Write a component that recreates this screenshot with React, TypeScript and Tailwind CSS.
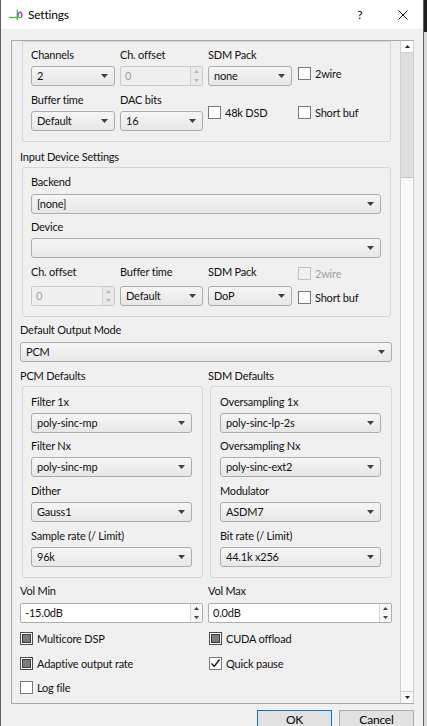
import React from "react";

const TXT = "text-[11px] tracking-[-0.2px]";

function Arrow({ color = "#404040" }: { color?: string }) {
  return (
    <svg width="7" height="4" viewBox="0 0 7 4" className="shrink-0">
      <path d="M0 0H7L3.5 4Z" fill={color} />
    </svg>
  );
}

function Combo({ text, className = "" }: { text: string; className?: string }) {
  return (
    <div
      className={`h-[20px] border border-[#acacac] rounded-[3px] bg-linear-to-b from-[#f6f6f6] to-[#e7e7e7] flex items-center pl-[5px] pr-[6px] ${className}`}
    >
      <span className={`flex-1 truncate leading-[16px] ${TXT} text-[#111]`}>{text}</span>
      <Arrow />
    </div>
  );
}

function Spin({ text, disabled, className = "" }: { text: string; disabled?: boolean; className?: string }) {
  const arrow = disabled ? "#b8b8b8" : "#404040";
  return (
    <div
      className={`h-[20px] flex border rounded-[2px] ${
        disabled ? "border-[#c8c8c8] bg-[#efefef]" : "border-[#adadad] bg-white"
      } ${className}`}
    >
      <span className={`flex-1 pl-[4px] leading-[18px] ${TXT} ${disabled ? "text-[#9d9d9d]" : "text-[#111]"}`}>
        {text}
      </span>
      <div
        className={`w-[12px] flex flex-col border-l ${
          disabled ? "border-[#d2d2d2] bg-[#e9e9e9]" : "border-[#d6d6d6] bg-[#f7f7f7]"
        }`}
      >
        <div className="flex-1 flex items-center justify-center">
          <svg width="5" height="3" viewBox="0 0 5 3">
            <path d="M0 3H5L2.5 0Z" fill={arrow} />
          </svg>
        </div>
        <div className="flex-1 flex items-center justify-center">
          <svg width="5" height="3" viewBox="0 0 5 3">
            <path d="M0 0H5L2.5 3Z" fill={arrow} />
          </svg>
        </div>
      </div>
    </div>
  );
}

function Label({ children, className = "" }: { children: React.ReactNode; className?: string }) {
  return <div className={`h-[16px] leading-[16px] ${TXT} text-[#111] whitespace-nowrap ${className}`}>{children}</div>;
}

type CState = "off" | "on" | "partial" | "disabled";

function Check({ label, state, className = "" }: { label: string; state: CState; className?: string }) {
  return (
    <div className={`flex items-center h-[13px] ${className}`}>
      <div
        className={`w-[13px] h-[13px] border shrink-0 flex items-center justify-center ${
          state === "disabled"
            ? "border-[#c4c4c4] bg-[#f0f0f0]"
            : state === "partial"
            ? "border-[#4a4a4a] bg-white"
            : "border-[#7a7a7a] bg-white"
        }`}
      >
        {state === "partial" && <div className="w-[9px] h-[9px] bg-[#7c7c7c] border border-[#3a3a3a]" />}
        {state === "on" && (
          <svg width="11" height="11" viewBox="0 0 11 11">
            <path d="M1.5 5.5L4.2 8.5L9.5 1.5" stroke="#1a1a1a" strokeWidth="1.4" fill="none" />
          </svg>
        )}
      </div>
      <span
        className={`ml-[4px] ${TXT} leading-[16px] whitespace-nowrap ${
          state === "disabled" ? "text-[#a0a0a0]" : "text-[#111]"
        }`}
      >
        {label}
      </span>
    </div>
  );
}

function Stack({ label, children, className = "" }: { label: string; children: React.ReactNode; className?: string }) {
  return (
    <div className={`flex flex-col ${className}`}>
      <Label>{label}</Label>
      <div className="mt-[3px]">{children}</div>
    </div>
  );
}

function AppIcon() {
  return (
    <svg width="16" height="16" viewBox="0 0 16 16" className="shrink-0">
      <path d="M1 10.5H14" stroke="#3cc23c" strokeWidth="1.3" />
      <path d="M9.3 2.5V13" stroke="#3cc23c" strokeWidth="1.3" />
      <path d="M9.8 10C10.2 4.5 13 3.5 13.8 7.5L13.8 10" stroke="#c040c8" strokeWidth="1.5" fill="none" />
    </svg>
  );
}

export default function App() {
  return (
    <div className="w-[427px] h-[726px] flex bg-[#dadada] font-['Lato',sans-serif] text-black overflow-hidden">
      <div className="w-[424px] h-full flex flex-col border-l border-r border-[#5f5f5f] bg-[#f0f0f0] shrink-0">
        {/* title bar */}
        <div className="h-[29px] bg-white flex items-center shrink-0">
          <div className="ml-[7px]">
            <AppIcon />
          </div>
          <span className="ml-[4px] text-[12px] tracking-[-0.2px] leading-[16px]">Settings</span>
          <div className="flex-1" />
          <span className="w-[12px] text-center text-[12px] leading-[16px]">?</span>
          <svg width="10" height="10" viewBox="0 0 10 10" className="ml-[32px] mr-[15px]">
            <path d="M0.5 0.5L9.5 9.5M9.5 0.5L0.5 9.5" stroke="#111" strokeWidth="1" />
          </svg>
        </div>

        {/* body */}
        <div className="flex-1 pl-[10px] pr-[9px] pt-[11px] flex flex-col">
          <div className="h-[664px] flex border-l border-t border-b border-[#a9a9a9]">
            {/* viewport */}
            <div className="w-[387px] h-full overflow-hidden pl-[8px] pr-[7px]">
              {/* Output group (scrolled) */}
              <div className="ml-[2px] mr-[1px] border border-[#d5d5d5] rounded-b-[3px] pl-[8px] pr-[9px] pt-[5px] pb-[10px]">
                <div className="flex items-start">
                  <Stack label="Channels" className="w-[84px]">
                    <Combo text="2" />
                  </Stack>
                  <Stack label="Ch. offset" className="w-[83px] ml-[5px]">
                    <Spin text="0" disabled />
                  </Stack>
                  <Stack label="SDM Pack" className="w-[84px] ml-[5px]">
                    <Combo text="none" />
                  </Stack>
                  <Check label="2wire" state="off" className="ml-[6px] mt-[20px]" />
                </div>
                <div className="flex items-start mt-[6px]">
                  <Stack label="Buffer time" className="w-[84px]">
                    <Combo text="Default" />
                  </Stack>
                  <Stack label="DAC bits" className="w-[83px] ml-[5px]">
                    <Combo text="16" />
                  </Stack>
                  <Check label="48k DSD" state="off" className="w-[84px] ml-[5px] mt-[14px]" />
                  <Check label="Short buf" state="off" className="ml-[6px] mt-[14px]" />
                </div>
              </div>

              <Label className="mt-[7px]">Input Device Settings</Label>
              <div className="mt-[2px] ml-[2px] mr-[1px] border border-[#d5d5d5] rounded-[3px] pl-[8px] pr-[9px] pt-[6px] pb-[10px]">
                <Label>Backend</Label>
                <Combo text="[none]" className="mt-[4px]" />
                <Label className="mt-[5px]">Device</Label>
                <Combo text="" className="mt-[3px]" />
                <div className="flex items-start mt-[6px]">
                  <Label className="w-[84px]">Ch. offset</Label>
                  <Label className="w-[83px] ml-[5px]">Buffer time</Label>
                  <Label className="w-[84px] ml-[5px]">SDM Pack</Label>
                  <Check label="2wire" state="disabled" className="ml-[6px] mt-[3px]" />
                </div>
                <div className="flex items-start mt-[6px]">
                  <Spin text="0" disabled className="w-[84px]" />
                  <Combo text="Default" className="w-[83px] ml-[5px]" />
                  <Combo text="DoP" className="w-[84px] ml-[5px]" />
                  <Check label="Short buf" state="off" className="ml-[6px] mt-[5px]" />
                </div>
              </div>

              <Label className="mt-[5px]">Default Output Mode</Label>
              <Combo text="PCM" className="mt-[4px]" />

              <div className="flex mt-[6px]">
                <div className="w-[183px] flex flex-col">
                  <Label>PCM Defaults</Label>
                  <div className="mt-[2px] ml-[2px] border border-[#d5d5d5] rounded-[3px] pl-[8px] pr-[10px] pt-[7px] pb-[10px]">
                    <Stack label="Filter 1x">
                      <Combo text="poly-sinc-mp" />
                    </Stack>
                    <Stack label="Filter Nx" className="mt-[5px]">
                      <Combo text="poly-sinc-mp" />
                    </Stack>
                    <Stack label="Dither" className="mt-[6px]">
                      <Combo text="Gauss1" />
                    </Stack>
                    <Stack label="Sample rate (/ Limit)" className="mt-[6px]">
                      <Combo text="96k" />
                    </Stack>
                  </div>
                </div>
                <div className="w-[184px] ml-[5px] flex flex-col">
                  <Label>SDM Defaults</Label>
                  <div className="mt-[2px] ml-[2px] border border-[#d5d5d5] rounded-[3px] pl-[9px] pr-[10px] pt-[7px] pb-[10px]">
                    <Stack label="Oversampling 1x">
                      <Combo text="poly-sinc-lp-2s" />
                    </Stack>
                    <Stack label="Oversampling Nx" className="mt-[5px]">
                      <Combo text="poly-sinc-ext2" />
                    </Stack>
                    <Stack label="Modulator" className="mt-[6px]">
                      <Combo text="ASDM7" />
                    </Stack>
                    <Stack label="Bit rate (/ Limit)" className="mt-[6px]">
                      <Combo text="44.1k x256" />
                    </Stack>
                  </div>
                </div>
              </div>

              <div className="flex mt-[5px]">
                <div className="w-[183px] flex flex-col">
                  <Label>Vol Min</Label>
                  <Spin text="-15.0dB" className="mt-[4px]" />
                  <Check label="Multicore DSP" state="partial" className="mt-[9px]" />
                  <Check label="Adaptive output rate" state="partial" className="mt-[12px]" />
                  <Check label="Log file" state="off" className="mt-[11px]" />
                </div>
                <div className="w-[184px] ml-[5px] flex flex-col">
                  <Label>Vol Max</Label>
                  <Spin text="0.0dB" className="mt-[4px]" />
                  <Check label="CUDA offload" state="partial" className="mt-[9px] ml-[1px]" />
                  <Check label="Quick pause" state="on" className="mt-[12px] ml-[1px]" />
                </div>
              </div>
            </div>

            {/* scrollbar */}
            <div className="w-[15px] h-full pl-[1px] flex">
              <div className="flex-1 flex flex-col border-l border-r border-[#d0d0d0] bg-[#f8f8f8]">
                <div className="h-[12px] bg-white border-b border-[#d0d0d0] flex items-center justify-center">
                  <svg width="5" height="3" viewBox="0 0 5 3">
                    <path d="M0 3H5L2.5 0Z" fill="#222" />
                  </svg>
                </div>
                <div className="h-[125px] bg-[#dedede] border-b border-[#c6c6c6]" />
                <div className="flex-1" />
                <div className="h-[12px] border-t border-[#d0d0d0] flex items-center justify-center">
                  <svg width="5" height="3" viewBox="0 0 5 3">
                    <path d="M0 0H5L2.5 3Z" fill="#222" />
                  </svg>
                </div>
              </div>
            </div>
          </div>

          {/* buttons */}
          <div className="flex justify-end mt-[6px] gap-[7px]">
            <div className="w-[75px] h-[23px] border border-[#0078d7] bg-[#e1e1e1] flex justify-center pt-[1px]">
              <span className="text-[12px] tracking-[-0.2px] leading-[16px]">OK</span>
            </div>
            <div className="w-[75px] h-[23px] border border-[#adadad] bg-[#e1e1e1] flex justify-center pt-[1px]">
              <span className="text-[12px] tracking-[-0.2px] leading-[16px]">Cancel</span>
            </div>
          </div>
        </div>
      </div>
      <div className="w-[3px] h-full flex flex-col">
        <div className="h-[32px] bg-[#1f1f1f]" />
        <div className="flex-1 bg-[#d9d9d9]" />
      </div>
    </div>
  );
}
